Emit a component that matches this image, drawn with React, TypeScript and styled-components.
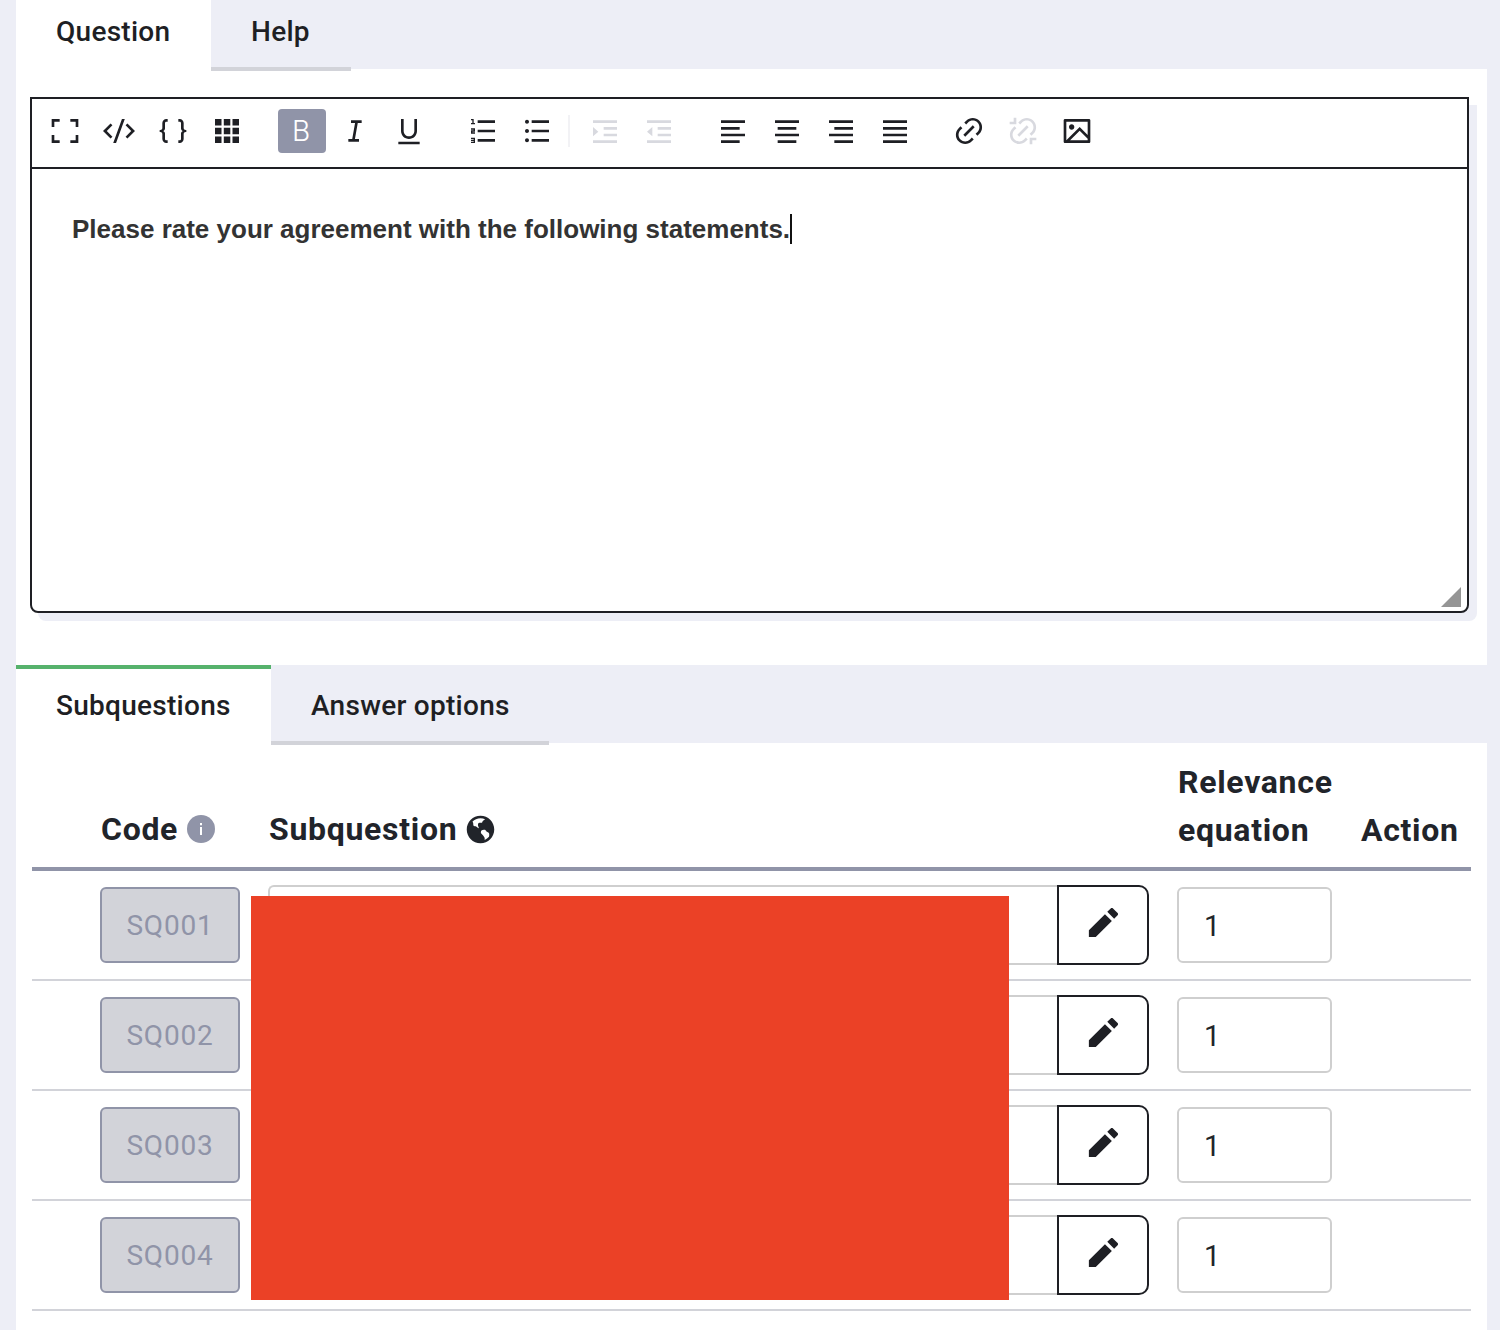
import React from "react";
import styled, { createGlobalStyle } from "styled-components";
import {
  RiEarthFill,
  RiPencilFill,
  RiFullscreenLine,
  RiCodeSSlashLine,
  RiBracesLine,
  RiItalic,
  RiUnderline,
  RiListOrdered,
  RiListUnordered,
  RiIndentIncrease,
  RiIndentDecrease,
  RiAlignLeft,
  RiAlignCenter,
  RiAlignRight,
  RiAlignJustify,
  RiLink,
  RiLinkUnlink,
  RiImageLine,
} from "react-icons/ri";

const Global = createGlobalStyle`
  html, body { margin: 0; padding: 0; background: #edeef6; }
  body { font-family: Roboto, "Liberation Sans", sans-serif; color: #1e1f24; }
`;

const Page = styled.div`
  position: relative;
  width: 1500px;
  height: 1330px;
  overflow: hidden;
  padding: 0 13px 0 16px;
  box-sizing: border-box;
`;
const Panel = styled.div`
  background: #fff;
  height: 100%;
`;
const TabBar = styled.div<{ $h: number }>`
  display: flex;
  align-items: stretch;
  height: ${(p) => p.$h}px;
  background: #edeef6;
`;
const Tab = styled.div<{ $active?: boolean; $green?: boolean; $w: number; $h: number; $top: number }>`
  box-sizing: border-box;
  width: ${(p) => p.$w}px;
  height: ${(p) => p.$h + 2}px;
  padding-left: 40px;
  padding-top: ${(p) => p.$top}px;
  background: ${(p) => (p.$active ? "#fff" : "#edeef6")};
  border-top: ${(p) => (p.$green ? "4px solid #56b26c" : "0")};
  border-bottom: ${(p) => (p.$active ? "0" : "4px solid #d2d3d9")};
  font-size: 28px;
  font-weight: 500;
  line-height: 36px;
  letter-spacing: 0.27px;
  color: #1e1f24;
`;
const EditorWrap = styled.div`
  box-sizing: border-box;
  margin: 28px 18px 0 14px;
  height: 516px;
  border: 2px solid #1e1f24;
  border-radius: 0 0 8px 8px;
  box-shadow: 8px 8px 0 #edeef6;
  background: #fff;
  position: relative;
`;
const Toolbar = styled.div`
  display: flex;
  box-sizing: border-box;
  height: 70px;
  padding: 0 0 4px 6px;
  align-items: center;
  border-bottom: 2px solid #1e1f24;
`;
const Group = styled.div<{ $flush?: boolean }>`
  display: flex;
  margin-right: ${(p) => (p.$flush ? 0 : 20)}px;
`;
const Sep = styled.div`
  width: 2px;
  height: 32px;
  background: #f2f2f5;
  margin: 0 8px 0 4px;
`;
const ToolBtn = styled.div<{ $active?: boolean; $off?: boolean }>`
  position: relative;
  width: 54px;
  height: 44px;
  display: flex;
  align-items: center;
  justify-content: center;
  color: ${(p) => (p.$off ? "#d8d9df" : "#1e1f24")};
  &::before {
    content: "";
    display: ${(p) => (p.$active ? "block" : "none")};
    position: absolute;
    left: 4px;
    right: 2px;
    top: 0;
    bottom: 0;
    border-radius: 4px;
    background: #9094a8;
  }
  svg { position: relative; display: block; }
`;
const BoldGlyph = styled.span`
  position: relative;
  color: #fff;
  font-size: 28px;
  font-family: Inter, "Liberation Sans", sans-serif;
  font-weight: 300;
  line-height: 1;
`;
const Body = styled.div`
  padding: 42px 40px 0;
  font-family: "Liberation Sans", Arial, sans-serif;
  font-weight: 700;
  font-size: 26px;
  line-height: 36px;
  color: #333;
`;
const Caret = styled.span`
  display: inline-block;
  width: 2px;
  height: 30px;
  background: #111;
  vertical-align: -6px;
`;
const Grip = styled.svg`
  position: absolute;
  right: 6px;
  bottom: 4px;
`;
const Spacer = styled.div<{ $h: number }>`
  height: ${(p) => p.$h}px;
`;
const Table = styled.div`
  margin: 0 16px;
`;
const HeaderRow = styled.div`
  display: grid;
  grid-template-columns: 140px 881px 155px auto;
  column-gap: 28px;
  align-items: end;
  box-sizing: border-box;
  height: 128px;
  padding: 0 0 13px 69px;
  border-bottom: 4px solid #9094a8;
`;
const Head = styled.div<{ $lift?: boolean }>`
  font-size: 32px;
  font-weight: 700;
  line-height: 48px;
  color: #21242a;
  display: flex;
  align-items: center;
  gap: 10px;
  letter-spacing: 0.7px;
  margin-bottom: ${(p) => (p.$lift ? 1 : 0)}px;
`;
const EarthIcon = styled(RiEarthFill)`
  margin-left: -3px;
  flex: none;
`;
const InfoIcon = styled.svg`
  flex: none;
  margin-left: -1px;
`;
const Row = styled.div`
  display: grid;
  grid-template-columns: 140px 881px 155px auto;
  column-gap: 28px;
  align-items: center;
  box-sizing: border-box;
  height: 110px;
  padding: 0 0 0 68px;
  border-bottom: 2px solid #d2d3d9;
`;
const CodeBox = styled.div`
  box-sizing: border-box;
  height: 76px;
  border: 2px solid #9094a8;
  border-radius: 6px;
  background: #d2d3d9;
  color: #9094a8;
  font-size: 28px;
  line-height: 74px;
  text-align: center;
  letter-spacing: 0.8px;
`;
const SubCell = styled.div`
  display: flex;
  height: 80px;
`;
const SubInput = styled.div`
  flex: 1;
  box-sizing: border-box;
  border: 2px solid #cfcfcf;
  border-right: 0;
  border-radius: 6px 0 0 6px;
  background: #fff;
`;
const EditBtn = styled.div`
  box-sizing: border-box;
  width: 92px;
  padding-bottom: 5px;
  border: 2px solid #1e1f24;
  border-radius: 0 10px 10px 0;
  background: #fff;
  display: flex;
  align-items: center;
  justify-content: center;
  color: #1e1f24;
`;
const RelInput = styled.div`
  box-sizing: border-box;
  height: 76px;
  border: 2px solid #cfcfcf;
  border-radius: 6px;
  padding-left: 25px;
  font-size: 29px;
  line-height: 74px;
  color: #21242a;
`;
const Redact = styled.div`
  position: absolute;
  left: 251px;
  top: 896px;
  width: 758px;
  height: 404px;
  background: #eb4126;
`;

const GridIcon = () => (
  <svg width="32" height="32" viewBox="0 0 32 32" fill="currentColor">
    <path d="M4 4h6.5v6.5H4zM12.8 4h6.5v6.5h-6.5zM21.5 4H28v6.5h-6.5zM4 12.8h6.5v6.5H4zM12.8 12.8h6.5v6.5h-6.5zM21.5 12.8H28v6.5h-6.5zM4 21.5h6.5V28H4zM12.8 21.5h6.5V28h-6.5zM21.5 21.5H28V28h-6.5z" />
  </svg>
);

const rows = ["SQ001", "SQ002", "SQ003", "SQ004"];

export default function App() {
  return (
    <Page>
      <Global />
      <Panel>
        <TabBar $h={69}>
          <Tab $active $w={195} $h={69} $top={14}>Question</Tab>
          <Tab $w={140} $h={69} $top={14}>Help</Tab>
        </TabBar>
        <EditorWrap>
          <Toolbar>
            <Group>
              <ToolBtn><RiFullscreenLine size={32} /></ToolBtn>
              <ToolBtn><RiCodeSSlashLine size={32} /></ToolBtn>
              <ToolBtn><RiBracesLine size={32} /></ToolBtn>
              <ToolBtn><GridIcon /></ToolBtn>
            </Group>
            <Group>
              <ToolBtn $active><BoldGlyph>B</BoldGlyph></ToolBtn>
              <ToolBtn><RiItalic size={32} /></ToolBtn>
              <ToolBtn><RiUnderline size={32} /></ToolBtn>
            </Group>
            <Group $flush>
              <ToolBtn><RiListOrdered size={32} /></ToolBtn>
              <ToolBtn><RiListUnordered size={32} /></ToolBtn>
            </Group>
            <Sep />
            <Group>
              <ToolBtn $off><RiIndentIncrease size={32} /></ToolBtn>
              <ToolBtn $off><RiIndentDecrease size={32} /></ToolBtn>
            </Group>
            <Group>
              <ToolBtn><RiAlignLeft size={32} /></ToolBtn>
              <ToolBtn><RiAlignCenter size={32} /></ToolBtn>
              <ToolBtn><RiAlignRight size={32} /></ToolBtn>
              <ToolBtn><RiAlignJustify size={32} /></ToolBtn>
            </Group>
            <Group $flush>
              <ToolBtn><RiLink size={32} /></ToolBtn>
              <ToolBtn $off><RiLinkUnlink size={32} /></ToolBtn>
              <ToolBtn><RiImageLine size={32} /></ToolBtn>
            </Group>
          </Toolbar>
          <Body>
            Please rate your agreement with the following statements.
            <Caret />
          </Body>
          <Grip width="20" height="20" viewBox="0 0 20 20">
            <path d="M20 0v20H0z" fill="#959595" />
          </Grip>
        </EditorWrap>
        <Spacer $h={52} />
        <TabBar $h={78}>
          <Tab $active $green $w={255} $h={78} $top={19}>Subquestions</Tab>
          <Tab $w={278} $h={78} $top={23}>Answer options</Tab>
        </TabBar>
        <Table>
          <HeaderRow>
            <Head $lift>
              Code
              <InfoIcon width="28" height="28" viewBox="0 0 28 28">
                <circle cx="14" cy="14" r="14" fill="#9094a8" />
                <path d="M13 8h2v2.2h-2zM13 12h2v8h-2z" fill="#fff" />
              </InfoIcon>
            </Head>
            <Head $lift>
              Subquestion
              <EarthIcon size={33} />
            </Head>
            <Head>
              <span>Relevance<br />equation</span>
            </Head>
            <Head>Action</Head>
          </HeaderRow>
          {rows.map((r) => (
            <Row key={r}>
              <CodeBox>{r}</CodeBox>
              <SubCell>
                <SubInput />
                <EditBtn>
                  <RiPencilFill size={39} />
                </EditBtn>
              </SubCell>
              <RelInput>1</RelInput>
              <div />
            </Row>
          ))}
        </Table>
      </Panel>
      <Redact />
    </Page>
  );
}
